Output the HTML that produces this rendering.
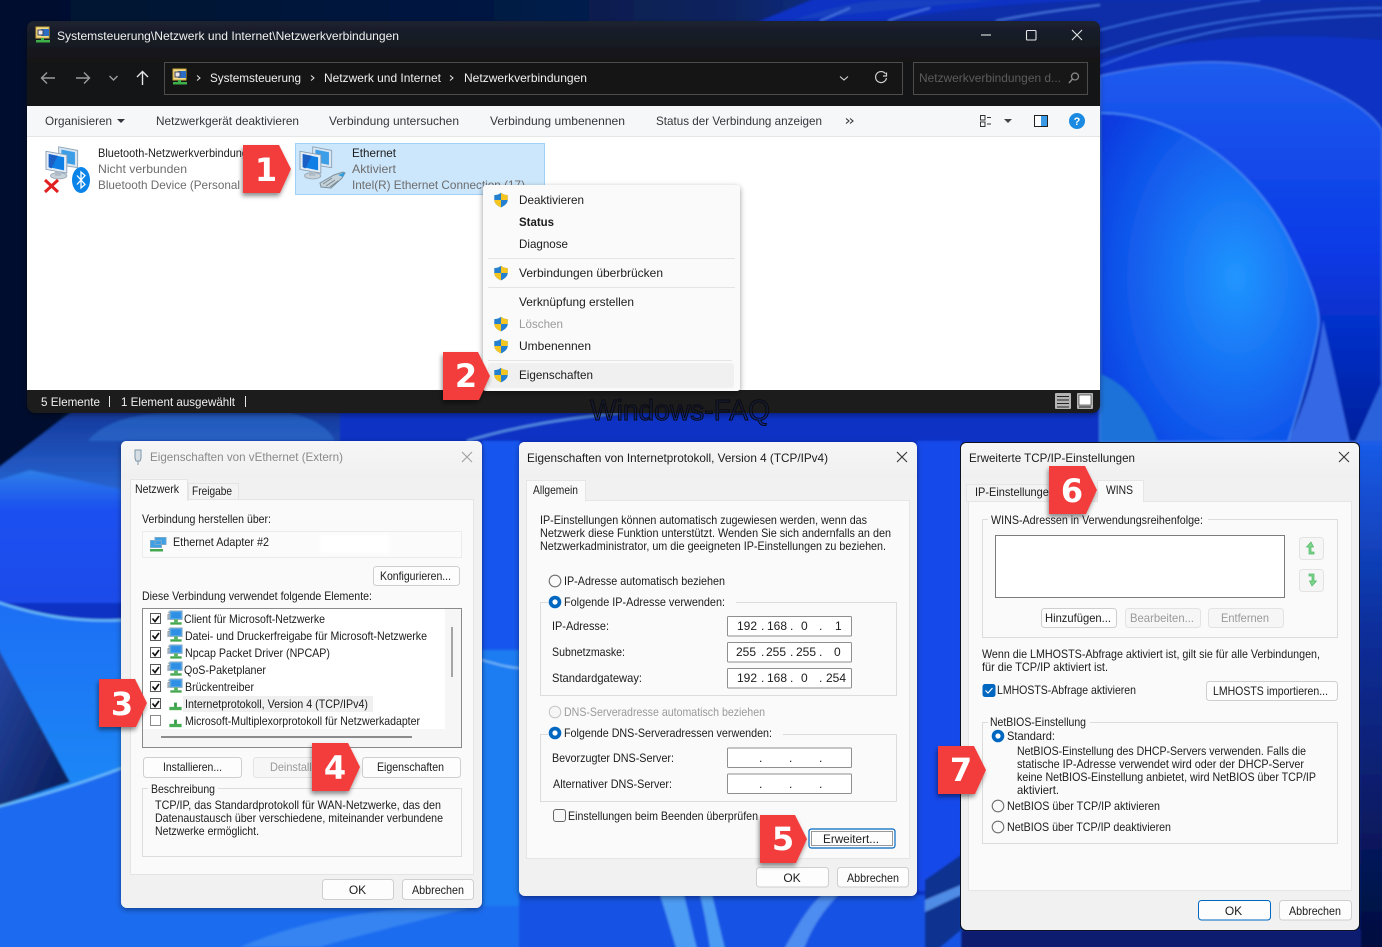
<!DOCTYPE html>
<html lang="de"><head><meta charset="utf-8"><title>Netzwerkverbindungen</title>
<style>
html,body{margin:0;padding:0;background:#0a2fc8;width:1382px;height:947px;overflow:hidden}
svg{display:block}
text{font-family:"Liberation Sans",sans-serif;font-size:12px;fill:#1c1c1c;white-space:pre}
.w{fill:#f0f0f0}.g{fill:#6d6d6d}.l{fill:#9a9a9a}.s{font-size:11.5px}
.n{font-family:"DejaVu Sans","Liberation Sans",sans-serif;font-weight:700;font-size:32px;fill:#fff;text-anchor:middle}
.btn{fill:#fdfdfd;stroke:#cfcfcf}.dis{fill:#f6f6f6;stroke:#e3e3e3}.grp{fill:none;stroke:#dcdcdc}
.fld{fill:#fff;stroke:#8f8f8f}.rad{fill:#fafafa;stroke:#6f6f6f;stroke-width:1.1}
.chk{fill:#fff;stroke:#5a5a5a}.tick{fill:none;stroke:#111;stroke-width:1.7}
.ic{fill:none;stroke:#9c9c9c;stroke-width:1.4}
</style></head><body>
<svg width="1382" height="947" viewBox="0 0 1382 947" xmlns="http://www.w3.org/2000/svg">
<defs>
<linearGradient id="dk" x1="0" y1="0" x2="1" y2="0"><stop offset="0" stop-color="#04102c"/><stop offset=".6" stop-color="#061a44"/><stop offset=".85" stop-color="#08245f"/><stop offset="1" stop-color="#0a2f90"/></linearGradient>
<linearGradient id="p1" x1="0" y1="0" x2="0" y2="1"><stop offset="0" stop-color="#1e5cee"/><stop offset=".5" stop-color="#0a3ae6"/><stop offset="1" stop-color="#00209c"/></linearGradient>
<radialGradient id="p2" cx=".62" cy=".5" r=".75"><stop offset="0" stop-color="#2196ff"/><stop offset=".55" stop-color="#1464f0"/><stop offset="1" stop-color="#0a3adf"/></radialGradient>
<linearGradient id="lb" x1="0" y1="0" x2="0" y2="1"><stop offset="0" stop-color="#1d6ef4"/><stop offset="1" stop-color="#1a8af6"/></linearGradient>
<linearGradient id="lt" x1="0" y1="0" x2="0" y2="1"><stop offset="0" stop-color="#2f7fe8"/><stop offset=".3" stop-color="#1a50f0"/><stop offset="1" stop-color="#1e4cea"/></linearGradient>
<linearGradient id="dt" x1="0" y1="0" x2="1" y2="1"><stop offset="0" stop-color="#2d52b8"/><stop offset="1" stop-color="#081a54"/></linearGradient>
<linearGradient id="rr" x1="0" y1="0" x2="0" y2="1"><stop offset="0" stop-color="#1a5ce8"/><stop offset=".35" stop-color="#0c2f9c"/><stop offset="1" stop-color="#040c38"/></linearGradient>
<linearGradient id="tb" x1="0" y1="0" x2="0" y2="1"><stop offset="0" stop-color="#1b2130"/><stop offset="1" stop-color="#141517"/></linearGradient>
<linearGradient id="dh" x1="0" y1="0" x2="0" y2="1"><stop offset="0" stop-color="#f6f6f7"/><stop offset="1" stop-color="#f0f0f0"/></linearGradient>
<linearGradient id="dm" x1="0" y1="0" x2="0" y2="1"><stop offset="0" stop-color="#153a9c"/><stop offset="1" stop-color="#2a6ad8"/></linearGradient>
<filter id="sh" x="-10%" y="-10%" width="120%" height="120%"><feDropShadow dx="0" dy="2" stdDeviation="3" flood-color="#000" flood-opacity=".4"/></filter>
<filter id="sb" x="-30%" y="-30%" width="160%" height="160%"><feDropShadow dx="-1" dy="3" stdDeviation="2.5" flood-color="#000" flood-opacity=".45"/></filter>
<filter id="bl"><feGaussianBlur stdDeviation="1.2"/></filter>
<filter id="wb" filterUnits="userSpaceOnUse" x="-20" y="-20" width="1422" height="987"><feGaussianBlur stdDeviation="1"/></filter>
<clipPath id="sc"><path d="M8 .8C6.2 2.4 4 3.1 1.3 3.1V8C1.3 11.6 4.8 14 8 15.4C11.2 14 14.7 11.6 14.7 8V3.1C12 3.1 9.8 2.4 8 .8Z"/></clipPath>
<symbol id="shield" viewBox="0 0 16 16" overflow="visible"><g clip-path="url(#sc)"><rect width="16" height="16" fill="#2580cf"/><rect x="8" width="8" height="8" fill="#f6c51f"/><rect y="8" width="8" height="8" fill="#f6c51f"/></g></symbol>
<symbol id="mon" viewBox="0 0 44 42" overflow="visible">
<path d="M15 2L36 6V25L15 22Z" fill="#d9e6f2" stroke="#8ea3b6"/><path d="M18 5L33 8V22L18 19Z" fill="#3d9ee8"/>
<path d="M1 7L24 11V31L1 27Z" fill="#e4edf5" stroke="#8a9fb3"/><path d="M4 10L21 13.500V28L4 24.500Z" fill="#0f7fe6"/><path d="M4 10L14 12L7 26L4 24.500Z" fill="#1b5fc4"/>
<ellipse cx="15" cy="34" rx="9" ry="3.500" fill="#c8d2da" stroke="#99a7b3"/><rect x="11" y="29" width="7" height="5" fill="#aebbc6"/>
</symbol>
<symbol id="sm" viewBox="0 0 18 18" overflow="visible">
<path d="M1 5l2-1v5l-2 1zM1 2l2 1" stroke="#8a9aa8" fill="#b8c8d4"/><rect x="3" y="1" width="13" height="9" fill="#49a4ee" stroke="#8aa9c0"/><rect x="4.500" y="2.500" width="10" height="6" fill="#2f8fe4"/><rect x="7.500" y="10" width="4" height="3" fill="#54b460"/><rect x="3.500" y="13" width="12" height="2.500" fill="#45a850"/>
</symbol>
<symbol id="prot" viewBox="0 0 18 18" overflow="visible"><path d="M7.500 7h3v5h-3z" fill="#3a9e48"/><rect x="2.500" y="11.500" width="13" height="3.500" fill="#46ad52"/></symbol>
<symbol id="tico" viewBox="0 0 16 16" overflow="visible"><rect x="1" y="0" width="13" height="11" fill="#f3dc8a" stroke="#c9a93c"/><rect x="6" y="2" width="8" height="7" fill="#2b6cc4"/><rect x="3" y="3" width="5" height="5" fill="#e8e8f0" stroke="#445"/><rect x="6" y="11" width="3" height="2" fill="#3db04a"/><rect x="1" y="13" width="14" height="2.500" fill="#3db04a"/></symbol>
</defs>

<!-- wallpaper -->
<g filter="url(#wb)">
<rect x="-20" y="-20" width="1422" height="987" fill="#0a30c4"/>
<path d="M-20 -20H860L760 21L620 60L300 200L70 413L-20 482Z" fill="url(#dk)"/>
<path d="M790 21C830 8 850 3 880 0H1000C930 6 860 12 790 21Z" fill="#1340c0"/>
<path d="M880 21C960 8 1020 3 1100 0H1382V40C1260 30 1180 40 1100 60V21Z" fill="#0d2ea8"/>
<path d="M820 21L850 8M888 21C900 16 915 12 930 8M996 21C1030 14 1060 10 1100 5" fill="none" stroke="#4a7ce6" stroke-width="1.500"/>
<path d="M1100 30C1160 14 1220 4 1260 0M1100 52C1180 24 1290 8 1382 8M1100 66C1190 30 1270 18 1382 15" fill="none" stroke="#3d74ec" stroke-width="1.200"/>
<path d="M1100 76C1170 60 1240 56 1290 74C1340 92 1370 110 1382 130V442H1100Z" fill="url(#p1)" stroke="#4d84f4" stroke-width="1.200"/>
<path d="M1100 113C1170 112 1250 160 1290 240C1310 280 1322 310 1318 330C1310 375 1295 420 1288 442H1100Z" fill="url(#p2)" stroke="#4a8cf4" stroke-width="1.500"/>
<path d="M1323 320L1350 442H1288C1305 405 1318 365 1323 320Z" fill="#3468e4"/>
<path d="M1355 442L1382 382V442Z" fill="#2c62dc"/>
<path d="M1100 374C1130 385 1148 415 1158 442H1100Z" fill="#1b72d8"/>
<!-- under main window -->
<path d="M70 413L-20 482V500H125V441H340L340 413Z" fill="url(#dm)"/>
<path d="M88 441C100 425 130 413 170 413H290C315 418 330 430 335 441Z" fill="#2f72d4" opacity=".55"/>
<path d="M467 441C520 425 570 418 620 413" stroke="#5a96e6" stroke-width="2" fill="none"/>
<!-- left -->
<path d="M-20 486L30 470L125 490V603L-20 603Z" fill="url(#lt)"/>
<path d="M-20 596C40 618 80 622 125 620V780L-20 810Z" fill="url(#lb)"/>
<path d="M-20 615L70 782L-20 812Z" fill="url(#dt)"/>
<path d="M-20 811C40 795 85 780 125 768V967H-20Z" fill="#1b6af0"/>
<path d="M-20 596C40 618 80 622 122 620M-20 811C40 797 85 782 122 768" stroke="#6cc0fa" stroke-width="2.200" fill="none"/>
<!-- middle strips -->
<rect x="482" y="441" width="38" height="210" fill="#1457ee"/><rect x="482" y="650" width="38" height="310" fill="#1a7cf2"/>
<path d="M482 660C500 665 510 668 520 668" stroke="#7fc6fa" stroke-width="1.500" fill="none"/>
<rect x="917" y="441" width="44" height="450" fill="#1549ea"/>
<rect x="120" y="906" width="400" height="60" fill="#1a6cf0"/>
<rect x="519" y="895" width="445" height="70" fill="#1452e4"/>
<path d="M660 895C668 920 672 935 680 960H700C692 930 688 910 684 895ZM700 895C706 920 708 935 712 960H728C720 930 716 910 712 895Z" fill="#4d9cf4"/>
<path d="M778 960C800 920 810 905 822 895H838C820 915 810 930 800 960Z" fill="#4d8cf0"/>
<path d="M240 947C280 930 340 912 420 908H470C420 920 360 935 320 947Z" fill="#4d9cf4" opacity=".5"/>
<path d="M925 880L961 855V930L925 960Z" fill="#103090"/>
<path d="M925 900L961 885V895L925 912Z" fill="#4f8ce6"/>
<rect x="1359" y="441" width="43" height="526" fill="url(#rr)"/>
<rect x="961" y="930" width="400" height="37" fill="#0c1f6e"/>
</g>

<!-- main window -->
<g filter="url(#sh)">
<rect x="27" y="21" width="1073" height="392" rx="8" fill="#1a1a1c"/>
<path d="M35 21H1092Q1100 21 1100 29V62H27V29Q27 21 35 21Z" fill="url(#tb)"/>
</g>
<rect x="27" y="62" width="1073" height="44" fill="#141517"/>
<use href="#tico" x="35" y="27" width="16" height="16"/>
<text x="57" y="40" class="w" textLength="342" lengthAdjust="spacingAndGlyphs">Systemsteuerung\Netzwerk und Internet\Netzwerkverbindungen</text>
<path d="M981 35H991" stroke="#e4e4e4" stroke-width="1.100"/><rect x="1026.500" y="30.500" width="9.500" height="9.500" rx="1" fill="none" stroke="#e4e4e4" stroke-width="1.100"/><path d="M1072 30L1082 40M1082 30L1072 40" stroke="#e4e4e4" stroke-width="1.100"/>
<path d="M55 78H42M47 72.500L41.500 78L47 83.500" class="ic"/>
<path d="M76 78H89M84 72.500L89.500 78L84 83.500" class="ic"/>
<path d="M109.500 76L113.500 80L117.500 76" class="ic"/>
<path d="M142.500 85V71.500M137 77L142.500 71.500L148 77" fill="none" stroke="#e6e6e6" stroke-width="1.400"/>
<rect x="164.500" y="62.500" width="738" height="32" fill="#151515" stroke="#4c4c4c"/>
<use href="#tico" x="172" y="69" width="16" height="16"/>
<path d="M197 75.500l3 2.500l-3 2.500M311 75.500l3 2.500l-3 2.500M450 75.500l3 2.500l-3 2.500" fill="none" stroke="#e8e8e8"/>
<text x="210" y="82" class="w" textLength="91" lengthAdjust="spacingAndGlyphs">Systemsteuerung</text>
<text x="324" y="82" class="w" textLength="117" lengthAdjust="spacingAndGlyphs">Netzwerk und Internet</text>
<text x="464" y="82" class="w" textLength="123" lengthAdjust="spacingAndGlyphs">Netzwerkverbindungen</text>
<path d="M840 76.500l4 3.500l4-3.500" fill="none" stroke="#d8d8d8" stroke-width="1.100"/>
<path d="M885.500 73.800A5.500 5.500 0 1 0 886.500 78M886.500 72.500V76H883" fill="none" stroke="#d0d0d0" stroke-width="1.200"/>
<rect x="913.500" y="62.500" width="174" height="32" fill="#171717" stroke="#4c4c4c"/>
<text x="919" y="82" style="fill:#5c5c5c" textLength="142" lengthAdjust="spacingAndGlyphs">Netzwerkverbindungen d...</text>
<circle cx="1075" cy="76.500" r="3.500" fill="none" stroke="#888" stroke-width="1.300"/><path d="M1072.500 79L1069 83" stroke="#888" stroke-width="1.500"/>
<!-- toolbar -->
<rect x="27" y="106" width="1073" height="284" fill="#fff"/>
<rect x="27" y="106" width="1073" height="31" fill="#f6f7f8"/>
<path d="M27 136.500H1100" stroke="#e6e6e6"/>
<text x="45" y="125" style="fill:#33363c" textLength="67" lengthAdjust="spacingAndGlyphs">Organisieren</text>
<path d="M117 119h8l-4 4z" fill="#33363c"/>
<text x="156" y="125" style="fill:#33363c" textLength="143" lengthAdjust="spacingAndGlyphs">Netzwerkgerät deaktivieren</text>
<text x="329" y="125" style="fill:#33363c" textLength="130" lengthAdjust="spacingAndGlyphs">Verbindung untersuchen</text>
<text x="490" y="125" style="fill:#33363c" textLength="135" lengthAdjust="spacingAndGlyphs">Verbindung umbenennen</text>
<text x="656" y="125" style="fill:#33363c" textLength="166" lengthAdjust="spacingAndGlyphs">Status der Verbindung anzeigen</text>
<path d="M846 118.500l3 2.500l-3 2.500M850 118.500l3 2.500l-3 2.500" fill="none" stroke="#333" stroke-width="1.100"/>
<path d="M980.500 115.500h4.500v4.500h-4.500zM980.500 122h4.500v4.500h-4.500zM987 117.500h4M987 124h4" fill="none" stroke="#333"/>
<path d="M1004 119h8l-4 4z" fill="#444"/>
<rect x="1034.500" y="115.500" width="13" height="11" fill="#fff" stroke="#222"/><rect x="1041" y="116" width="6" height="10" fill="#3a9ae6"/>
<circle cx="1077" cy="121" r="8" fill="#1b8ae2"/><text x="1077" y="125" text-anchor="middle" style="fill:#fff;font-weight:700;font-size:11px">?</text>
<!-- items -->
<use href="#mon" x="45" y="145" width="40" height="38"/>
<path d="M45 180L58 192M58 180L45 192" stroke="#e02020" stroke-width="3"/>
<ellipse cx="81" cy="180" rx="9" ry="13" fill="#0a84e8"/><path d="M77 175.500L85 184.500L81 188V172L85 175.500L77 184.500" fill="none" stroke="#fff" stroke-width="1.300"/>
<text x="98" y="157" textLength="150" lengthAdjust="spacingAndGlyphs">Bluetooth-Netzwerkverbindung</text>
<text x="98" y="173" class="g" textLength="89" lengthAdjust="spacingAndGlyphs">Nicht verbunden</text>
<text x="98" y="189" class="g" textLength="142" lengthAdjust="spacingAndGlyphs">Bluetooth Device (Personal</text>
<rect x="295.500" y="143.500" width="249" height="51" fill="#cce6fb" stroke="#9fd0f5"/>
<use href="#mon" x="299" y="145" width="40" height="38"/>
<path d="M320 183l14-8l9-3l2 1l-3 5l-11 10l-10-1z" fill="#c4d2da" stroke="#7d8f9c"/><path d="M323 184l9-6M326 186l9-6M330 187l8-6" stroke="#77858f" stroke-width=".8"/><path d="M338 175l7-3l-2 5z" fill="#2f9ee0"/>
<text x="352" y="157" textLength="44" lengthAdjust="spacingAndGlyphs">Ethernet</text>
<text x="352" y="173" class="g" textLength="44" lengthAdjust="spacingAndGlyphs">Aktiviert</text>
<text x="352" y="189" class="g" textLength="173" lengthAdjust="spacingAndGlyphs">Intel(R) Ethernet Connection (17)</text>
<!-- status -->
<text x="41" y="406" class="w" textLength="59" lengthAdjust="spacingAndGlyphs">5 Elemente</text>
<path d="M109.500 396V407M245.500 396V407" stroke="#e6e6e6"/>
<text x="121" y="406" class="w" textLength="114" lengthAdjust="spacingAndGlyphs">1 Element ausgewählt</text>
<rect x="1055" y="393" width="16" height="16" rx="1" fill="#b4b4b4"/><path d="M1057 396.500h12M1057 400h12M1057 403.500h12M1057 407h12" stroke="#222"/>
<rect x="1077" y="393" width="16" height="16" rx="1" fill="#b4b4b4"/><rect x="1079" y="395" width="12" height="10" fill="#fff" stroke="#222" stroke-width=".6"/><path d="M1079 407h12" stroke="#222"/>
<text x="590" y="420" textLength="180" lengthAdjust="spacingAndGlyphs" style="font-size:29px;fill:#0d1c4a;fill-opacity:.35;stroke:#0a0a12;stroke-width:1">Windows-FAQ</text>

<!-- context menu -->
<rect x="483" y="185" width="257" height="206" rx="3" fill="#fafafa" filter="url(#sh)"/>
<rect x="488" y="363" width="246" height="25" rx="3" fill="#f0f0f0"/>
<path d="M488 258.500H735M488 287.500H735M488 360.500H732" stroke="#e4e4e4"/>
<use href="#shield" x="493" y="192" width="16" height="16"/>
<use href="#shield" x="493" y="265" width="16" height="16"/>
<use href="#shield" x="493" y="316" width="16" height="16"/>
<use href="#shield" x="493" y="338" width="16" height="16"/>
<use href="#shield" x="493" y="367" width="16" height="16"/>
<text x="519" y="204" textLength="65" lengthAdjust="spacingAndGlyphs">Deaktivieren</text>
<text x="519" y="226" style="font-weight:700" textLength="35" lengthAdjust="spacingAndGlyphs">Status</text>
<text x="519" y="248" textLength="49" lengthAdjust="spacingAndGlyphs">Diagnose</text>
<text x="519" y="277" textLength="144" lengthAdjust="spacingAndGlyphs">Verbindungen überbrücken</text>
<text x="519" y="306" textLength="115" lengthAdjust="spacingAndGlyphs">Verknüpfung erstellen</text>
<text x="519" y="328" class="l" textLength="44" lengthAdjust="spacingAndGlyphs">Löschen</text>
<text x="519" y="350" textLength="72" lengthAdjust="spacingAndGlyphs">Umbenennen</text>
<text x="519" y="379" textLength="74" lengthAdjust="spacingAndGlyphs">Eigenschaften</text>

<!-- dialog 1 -->
<g filter="url(#sh)"><rect x="121" y="441" width="361" height="467" rx="6" fill="#f1f1f1"/></g>
<path d="M127 441H476Q482 441 482 447V478H121V447Q121 441 127 441Z" fill="url(#dh)"/>
<path d="M135 450h6v8l-1 3h-4l-1-3zM138 461v4" fill="#d5dee4" stroke="#7e97a8"/>
<text x="150" y="461" class="g" style="fill:#8a8a8a" textLength="193" lengthAdjust="spacingAndGlyphs">Eigenschaften von vEthernet (Extern)</text>
<path d="M462 452L472 462M472 452L462 462" stroke="#a0a0a0" stroke-width="1.100"/>
<rect x="130.500" y="499.500" width="343" height="375" fill="#fafafa" stroke="#e4e4e4"/>
<rect x="188.500" y="483.500" width="50" height="16" fill="#f3f3f3" stroke="#e4e4e4"/>
<rect x="130.500" y="479.500" width="57" height="21" fill="#fafafa" stroke="#e4e4e4"/><rect x="131" y="498" width="56" height="4" fill="#fafafa"/>
<text x="135" y="493" textLength="44" lengthAdjust="spacingAndGlyphs">Netzwerk</text>
<text x="192" y="495" textLength="40" lengthAdjust="spacingAndGlyphs">Freigabe</text>
<text x="142" y="523" textLength="129" lengthAdjust="spacingAndGlyphs">Verbindung herstellen über:</text>
<rect x="142.500" y="531.500" width="319" height="26" fill="#fbfbfb" stroke="#ececec"/>
<rect x="320" y="535" width="70" height="18" fill="#fff" filter="url(#bl)"/>
<path d="M155 537.500h11v7h-11zM150.500 540.500h11v7h-11z" fill="#3d9fe6" stroke="#7aa8c8"/><rect x="150" y="549" width="13" height="2.500" fill="#45a850"/>
<text x="173" y="546" textLength="96" lengthAdjust="spacingAndGlyphs">Ethernet Adapter #2</text>
<rect x="373.500" y="566.500" width="86" height="19" rx="3" class="btn"/>
<text x="380" y="580" textLength="71" lengthAdjust="spacingAndGlyphs">Konfigurieren...</text>
<text x="142" y="600" textLength="230" lengthAdjust="spacingAndGlyphs">Diese Verbindung verwendet folgende Elemente:</text>
<rect x="142.500" y="608.500" width="319" height="139" fill="#f6f6f6" stroke="#8a8a8a"/>
<rect x="143" y="609" width="302" height="120" fill="#fff"/>
<rect x="183" y="696" width="190" height="16" fill="#f0f0f0"/>
<path d="M452 627V677" stroke="#a4a4a4" stroke-width="2"/>
<path d="M161 737H412" stroke="#8c8c8c" stroke-width="2"/>
<g>
<rect x="150.500" y="613.500" width="10" height="10" class="chk"/><path d="M152.500 618.500l2.500 3l4-5.500" class="tick"/>
<rect x="150.500" y="630.500" width="10" height="10" class="chk"/><path d="M152.500 635.500l2.500 3l4-5.500" class="tick"/>
<rect x="150.500" y="647.500" width="10" height="10" class="chk"/><path d="M152.500 652.500l2.500 3l4-5.500" class="tick"/>
<rect x="150.500" y="664.500" width="10" height="10" class="chk"/><path d="M152.500 669.500l2.500 3l4-5.500" class="tick"/>
<rect x="150.500" y="681.500" width="10" height="10" class="chk"/><path d="M152.500 686.500l2.500 3l4-5.500" class="tick"/>
<rect x="150.500" y="698.500" width="10" height="10" class="chk"/><path d="M152.500 703.500l2.500 3l4-5.500" class="tick"/>
<rect x="150.500" y="715.500" width="10" height="10" fill="#fff" stroke="#8a8a8a"/>
</g>
<use href="#sm" x="167" y="610" width="17" height="17"/>
<use href="#sm" x="167" y="627" width="17" height="17"/>
<use href="#sm" x="167" y="644" width="17" height="17"/>
<use href="#sm" x="167" y="661" width="17" height="17"/>
<use href="#sm" x="167" y="678" width="17" height="17"/>
<use href="#prot" x="167" y="696" width="17" height="17"/>
<use href="#prot" x="167" y="713" width="17" height="17"/>
<text x="184" y="623" textLength="141" lengthAdjust="spacingAndGlyphs">Client für Microsoft-Netzwerke</text>
<text x="185" y="640" textLength="242" lengthAdjust="spacingAndGlyphs">Datei- und Druckerfreigabe für Microsoft-Netzwerke</text>
<text x="185" y="657" textLength="145" lengthAdjust="spacingAndGlyphs">Npcap Packet Driver (NPCAP)</text>
<text x="184" y="674" textLength="82" lengthAdjust="spacingAndGlyphs">QoS-Paketplaner</text>
<text x="185" y="691" textLength="69" lengthAdjust="spacingAndGlyphs">Brückentreiber</text>
<text x="185" y="708" textLength="183" lengthAdjust="spacingAndGlyphs">Internetprotokoll, Version 4 (TCP/IPv4)</text>
<text x="185" y="725" textLength="235" lengthAdjust="spacingAndGlyphs">Microsoft-Multiplexorprotokoll für Netzwerkadapter</text>
<rect x="143.500" y="757.500" width="98" height="20" rx="3" class="btn"/>
<text x="163" y="771" textLength="59" lengthAdjust="spacingAndGlyphs">Installieren...</text>
<rect x="253.500" y="757.500" width="98" height="20" rx="3" class="dis"/>
<text x="270" y="771" class="l" textLength="66" lengthAdjust="spacingAndGlyphs">Deinstallieren</text>
<rect x="362.500" y="757.500" width="98" height="20" rx="3" class="btn"/>
<text x="377" y="771" textLength="67" lengthAdjust="spacingAndGlyphs">Eigenschaften</text>
<rect x="142.500" y="788.500" width="319" height="68" class="grp"/>
<rect x="148" y="784" width="70" height="9" fill="#fafafa"/>
<text x="151" y="793" textLength="64" lengthAdjust="spacingAndGlyphs">Beschreibung</text>
<text x="155" y="809" textLength="286" lengthAdjust="spacingAndGlyphs">TCP/IP, das Standardprotokoll für WAN-Netzwerke, das den</text>
<text x="155" y="822" textLength="288" lengthAdjust="spacingAndGlyphs">Datenaustausch über verschiedene, miteinander verbundene</text>
<text x="155" y="835" textLength="104" lengthAdjust="spacingAndGlyphs">Netzwerke ermöglicht.</text>
<rect x="322.500" y="879.500" width="71" height="20" rx="3" class="btn"/>
<text x="357.500" y="894" text-anchor="middle">OK</text>
<rect x="402.500" y="879.500" width="71" height="20" rx="3" class="btn"/>
<text x="412" y="894" textLength="52" lengthAdjust="spacingAndGlyphs">Abbrechen</text>

<!-- dialog 2 -->
<g filter="url(#sh)"><rect x="519" y="442" width="398" height="454" rx="6" fill="#f1f1f1"/></g>
<path d="M525 442H911Q917 442 917 448V478H519V448Q519 442 525 442Z" fill="url(#dh)"/>
<text x="527" y="462" textLength="301" lengthAdjust="spacingAndGlyphs">Eigenschaften von Internetprotokoll, Version 4 (TCP/IPv4)</text>
<path d="M897 452L907 462M907 452L897 462" stroke="#333" stroke-width="1.100"/>
<rect x="526.500" y="500.500" width="383" height="358" fill="#fafafa" stroke="#e6e6e6"/>
<rect x="526.500" y="480.500" width="59" height="21" fill="#fafafa" stroke="#e6e6e6"/><rect x="527" y="499" width="58" height="4" fill="#fafafa"/>
<text x="533" y="494" textLength="45" lengthAdjust="spacingAndGlyphs">Allgemein</text>
<text x="540" y="524" textLength="327" lengthAdjust="spacingAndGlyphs">IP-Einstellungen können automatisch zugewiesen werden, wenn das</text>
<text x="540" y="537" textLength="351" lengthAdjust="spacingAndGlyphs">Netzwerk diese Funktion unterstützt. Wenden Sie sich andernfalls an den</text>
<text x="540" y="550" textLength="346" lengthAdjust="spacingAndGlyphs">Netzwerkadministrator, um die geeigneten IP-Einstellungen zu beziehen.</text>
<circle cx="555" cy="581" r="5.800" class="rad"/>
<text x="564" y="585" textLength="161" lengthAdjust="spacingAndGlyphs">IP-Adresse automatisch beziehen</text>
<rect x="540.500" y="602.500" width="356" height="93" class="grp"/>
<rect x="548" y="598" width="188" height="10" fill="#fafafa"/>
<circle cx="555" cy="602" r="6.300" fill="#0067c0"/><circle cx="555" cy="602" r="2.600" fill="#fff"/>
<text x="564" y="606" textLength="161" lengthAdjust="spacingAndGlyphs">Folgende IP-Adresse verwenden:</text>
<text x="552" y="630" textLength="57" lengthAdjust="spacingAndGlyphs">IP-Adresse:</text>
<text x="552" y="656" textLength="73" lengthAdjust="spacingAndGlyphs">Subnetzmaske:</text>
<text x="552" y="682" textLength="90" lengthAdjust="spacingAndGlyphs">Standardgateway:</text>
<rect x="727.500" y="616.500" width="124" height="19.500" rx="1" class="fld"/>
<rect x="727.500" y="642.500" width="124" height="19.500" rx="1" class="fld"/>
<rect x="727.500" y="668.500" width="124" height="19.500" rx="1" class="fld"/>
<text x="737" y="630">192</text><text x="761" y="630">.</text><text x="767" y="630">168</text><text x="790" y="630">.</text><text x="801" y="630">0</text><text x="819" y="630">.</text><text x="835" y="630">1</text>
<text x="736" y="656">255</text><text x="761" y="656">.</text><text x="766" y="656">255</text><text x="790" y="656">.</text><text x="796" y="656">255</text><text x="819" y="656">.</text><text x="834" y="656">0</text>
<text x="737" y="682">192</text><text x="761" y="682">.</text><text x="767" y="682">168</text><text x="790" y="682">.</text><text x="801" y="682">0</text><text x="819" y="682">.</text><text x="826" y="682">254</text>
<circle cx="555" cy="712" r="5.800" fill="#f6f6f6" stroke="#c4c4c4"/>
<text x="564" y="716" class="l" textLength="201" lengthAdjust="spacingAndGlyphs">DNS-Serveradresse automatisch beziehen</text>
<rect x="540.500" y="734.500" width="356" height="67" class="grp"/>
<rect x="548" y="730" width="235" height="10" fill="#fafafa"/>
<circle cx="555" cy="733" r="6.300" fill="#0067c0"/><circle cx="555" cy="733" r="2.600" fill="#fff"/>
<text x="564" y="737" textLength="208" lengthAdjust="spacingAndGlyphs">Folgende DNS-Serveradressen verwenden:</text>
<text x="552" y="762" textLength="122" lengthAdjust="spacingAndGlyphs">Bevorzugter DNS-Server:</text>
<text x="553" y="788" textLength="119" lengthAdjust="spacingAndGlyphs">Alternativer DNS-Server:</text>
<rect x="727.500" y="748" width="124" height="19.500" rx="1" class="fld"/>
<rect x="727.500" y="774" width="124" height="19.500" rx="1" class="fld"/>
<text x="759" y="762">.</text><text x="789" y="762">.</text><text x="819" y="762">.</text>
<text x="759" y="788">.</text><text x="789" y="788">.</text><text x="819" y="788">.</text>
<rect x="553.500" y="809.500" width="12" height="12" rx="2.500" fill="#f8f8f8" stroke="#666"/>
<text x="568" y="820" textLength="190" lengthAdjust="spacingAndGlyphs">Einstellungen beim Beenden überprüfen</text>
<rect x="809" y="829" width="86" height="19" rx="2.500" fill="#fdfdfd" stroke="#0067c0" stroke-width="1.200"/>
<rect x="811.500" y="831.500" width="81" height="14" fill="none" stroke="#333" stroke-dasharray="1 1"/>
<text x="823" y="843" textLength="56" lengthAdjust="spacingAndGlyphs">Erweitert...</text>
<rect x="756.500" y="867.500" width="72" height="19.500" rx="3" class="btn"/>
<text x="792" y="882" text-anchor="middle">OK</text>
<rect x="837.500" y="867.500" width="71" height="19.500" rx="3" class="btn"/>
<text x="847" y="882" textLength="52" lengthAdjust="spacingAndGlyphs">Abbrechen</text>

<!-- dialog 3 -->
<rect x="960" y="442" width="400" height="489" rx="6" fill="#0d1220"/>
<rect x="961" y="443" width="398" height="487" rx="6" fill="#f1f1f1"/>
<path d="M967 443H1353Q1359 443 1359 449V478H961V449Q961 443 967 443Z" fill="url(#dh)"/>
<text x="969" y="462" textLength="166" lengthAdjust="spacingAndGlyphs">Erweiterte TCP/IP-Einstellungen</text>
<path d="M1339 452L1349 462M1349 452L1339 462" stroke="#333" stroke-width="1.100"/>
<rect x="968.500" y="501.500" width="383" height="389" fill="#fafafa" stroke="#e6e6e6"/>
<rect x="966.500" y="484.500" width="96" height="17" fill="#f3f3f3" stroke="#e6e6e6"/>
<text x="975" y="496" textLength="80" lengthAdjust="spacingAndGlyphs">IP-Einstellungen</text>
<rect x="1097.500" y="480.500" width="46" height="21" fill="#fafafa" stroke="#e6e6e6"/><rect x="1098" y="499" width="45" height="4" fill="#fafafa"/>
<text x="1106" y="494" textLength="27" lengthAdjust="spacingAndGlyphs">WINS</text>
<rect x="982.500" y="519.500" width="355" height="118" class="grp"/>
<rect x="988" y="515" width="220" height="10" fill="#fafafa"/>
<text x="991" y="524" textLength="212" lengthAdjust="spacingAndGlyphs">WINS-Adressen in Verwendungsreihenfolge:</text>
<rect x="995.500" y="535.500" width="289" height="62" fill="#fff" stroke="#7c7c7c"/>
<rect x="1299.500" y="537.500" width="24" height="22" rx="3" class="dis"/>
<rect x="1299.500" y="569.500" width="24" height="22" rx="3" class="dis"/>
<path d="M1311 542l-4.500 5h2.500v7h5v-2h-3v-5h2.500z" fill="#7cd68c" stroke="#4fb566" stroke-width=".7"/>
<path d="M1312 586l4.500-5H1314v-7h-5v2h3v5h-2.500z" fill="#7cd68c" stroke="#4fb566" stroke-width=".7"/>
<rect x="1041.500" y="608.500" width="75" height="19" rx="3" class="btn"/>
<text x="1045" y="622" textLength="66" lengthAdjust="spacingAndGlyphs">Hinzufügen...</text>
<rect x="1125.500" y="608.500" width="75" height="19" rx="3" class="dis"/>
<text x="1130" y="622" class="l" textLength="64" lengthAdjust="spacingAndGlyphs">Bearbeiten...</text>
<rect x="1208.500" y="608.500" width="75" height="19" rx="3" class="dis"/>
<text x="1221" y="622" class="l" textLength="48" lengthAdjust="spacingAndGlyphs">Entfernen</text>
<text x="982" y="658" textLength="338" lengthAdjust="spacingAndGlyphs">Wenn die LMHOSTS-Abfrage aktiviert ist, gilt sie für alle Verbindungen,</text>
<text x="982" y="671" textLength="126" lengthAdjust="spacingAndGlyphs">für die TCP/IP aktiviert ist.</text>
<rect x="982.500" y="684" width="13" height="13" rx="2.500" fill="#0067c0"/><path d="M985.500 690.500l2.500 2.500l4.500-5" fill="none" stroke="#fff" stroke-width="1.200"/>
<text x="997" y="694" textLength="139" lengthAdjust="spacingAndGlyphs">LMHOSTS-Abfrage aktivieren</text>
<rect x="1206.500" y="681.500" width="131" height="19" rx="3" class="btn"/>
<text x="1213" y="695" textLength="115" lengthAdjust="spacingAndGlyphs">LMHOSTS importieren...</text>
<rect x="982.500" y="722.500" width="355" height="121" class="grp"/>
<rect x="988" y="718" width="102" height="10" fill="#fafafa"/>
<text x="990" y="726" textLength="96" lengthAdjust="spacingAndGlyphs">NetBIOS-Einstellung</text>
<circle cx="998" cy="736" r="6.300" fill="#0067c0"/><circle cx="998" cy="736" r="2.600" fill="#fff"/>
<text x="1007" y="740" textLength="48" lengthAdjust="spacingAndGlyphs">Standard:</text>
<text x="1017" y="755" textLength="289" lengthAdjust="spacingAndGlyphs">NetBIOS-Einstellung des DHCP-Servers verwenden. Falls die</text>
<text x="1017" y="768" textLength="287" lengthAdjust="spacingAndGlyphs">statische IP-Adresse verwendet wird oder der DHCP-Server</text>
<text x="1017" y="781" textLength="299" lengthAdjust="spacingAndGlyphs">keine NetBIOS-Einstellung anbietet, wird NetBIOS über TCP/IP</text>
<text x="1017" y="794" textLength="42" lengthAdjust="spacingAndGlyphs">aktiviert.</text>
<circle cx="998" cy="806" r="5.800" class="rad"/>
<text x="1007" y="810" textLength="153" lengthAdjust="spacingAndGlyphs">NetBIOS über TCP/IP aktivieren</text>
<circle cx="998" cy="827" r="5.800" class="rad"/>
<text x="1007" y="831" textLength="164" lengthAdjust="spacingAndGlyphs">NetBIOS über TCP/IP deaktivieren</text>
<rect x="1198.500" y="900.500" width="72" height="19.500" rx="3" fill="#fdfdfd" stroke="#0067c0"/>
<text x="1233.500" y="915" text-anchor="middle">OK</text>
<rect x="1279.500" y="900.500" width="72" height="19.500" rx="3" class="btn"/>
<text x="1289" y="915" textLength="52" lengthAdjust="spacingAndGlyphs">Abbrechen</text>

<!-- badges -->
<g filter="url(#sb)" fill="#f33c3c">
<path d="M243 145H279L291 169L280 193H243Z"/>
<path d="M443 352H478L490 376L479 400H443Z"/>
<path d="M99 679H135L147 703L136 727H99Z"/>
<path d="M312 743H348L360 767L349 791H312Z"/>
<path d="M760 815H795L807 839L796 863H760Z"/>
<path d="M1049 466H1085L1097 490L1086 514H1049Z"/>
<path d="M938 746H974L986 770L975 794H938Z"/>
</g>
<text x="266" y="181" class="n">1</text>
<text x="466" y="387" class="n">2</text>
<text x="122" y="715" class="n">3</text>
<text x="335" y="779" class="n">4</text>
<text x="783" y="850" class="n">5</text>
<text x="1072" y="502" class="n">6</text>
<text x="961" y="781" class="n">7</text>
</svg>
</body></html>
